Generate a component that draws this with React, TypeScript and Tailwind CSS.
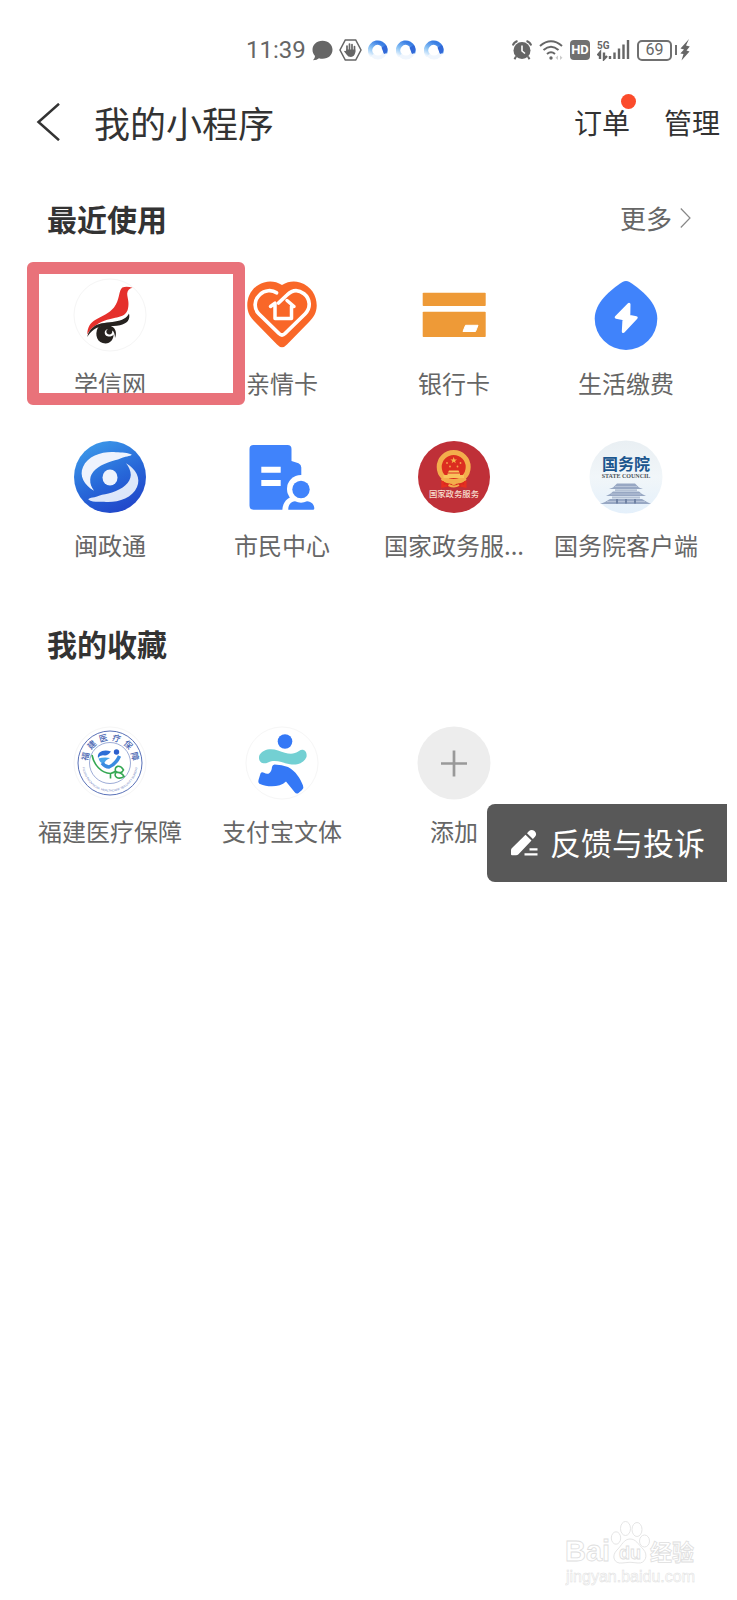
import type { ReactNode } from "react";

function Icon({ children }: { children: ReactNode }) {
  return (
    <svg viewBox="0 0 72 72" className="size-[72px] shrink-0 overflow-visible" aria-hidden="true">
      {children}
    </svg>
  );
}

const ChsiIcon = (
  <Icon>
    <circle cx="36" cy="36" r="36" fill="#fff" stroke="#f5f5f5" />
    <path
      d="M48.300 8.400Q53 7 58.500 8.800Q53.500 10 53.200 14.500C53.200 19 55.500 23 54 29.500C52 39 43 37.500 31 41.500C22 45 16.500 49.500 13.300 55.500C13.500 48 16 44 22 40.500C28 37 35 34.500 40 28.500C46 20.500 44.500 11.500 48.300 8.400Z"
      fill="#e5302c"
    />
    <path
      d="M55 34.500C56.500 41 53 44.500 46 46.300C38 48 26 45.500 20 50.500C17 53 15 55 13.200 58C14 53 17 49.500 21 46.800C26 43.600 34 43.800 41 42.500C48 41.500 53 39 55 34.500Z"
      fill="#26221f"
    />
    <path
      d="M24 48.500C29 45 36 45 40 49C42.500 52 42.300 56 41 59C41 55.500 40 52.500 38.200 51.500C38.800 54.500 36.500 56 34.500 55.300C32 54.500 31.500 51.500 34 50C30 50.500 29.500 56 33.500 57.300C35.500 58 38.500 57.300 39.500 55.500C39.800 60 36.500 64.500 31.500 64.500C23.500 64.500 20 56 24 48.500Z"
      fill="#26221f"
    />
  </Icon>
);

const FamilyCardIcon = (
  <Icon>
    <path
      d="M36 6C30 2.300 24 1.800 18 3.400C6.500 7 1 17 1.300 27C1.500 34 4.500 38.500 9 43L31 65.500Q36 71 41 65.500L63 43C67.500 38.500 70.500 34 70.700 27C71 17 65.500 7 54 3.400C48 1.800 42 2.300 36 6Z"
      fill="#f96728"
    />
    <g fill="none" stroke="#fff" strokeLinecap="round" strokeLinejoin="round">
      <path
        d="M30.500 13.800C26 10.500 18.500 11 14 15.500C8 21 7.500 29.500 13 35L33 54.500Q36 57.500 39 54.500L59 35C65 29 64.500 20 58 14.700C52 10 46 11 41 16L32.500 24"
        strokeWidth="3.700"
      />
      <path d="M24.500 27.500L29 24.200V39.500H45.500V27.500H48L41 21.500" strokeWidth="3.500" />
    </g>
  </Icon>
);

const BankCardIcon = (
  <Icon>
    <rect x="4.700" y="13.700" width="63" height="13.300" rx=".8" fill="#ee9a37" />
    <rect x="4.700" y="32.700" width="63" height="25.300" rx=".8" fill="#ee9a37" />
    <path d="M47.500 46.300H60L57.500 52.500H45Z" fill="#fff" stroke="#fff" strokeLinejoin="round" />
  </Icon>
);

const UtilitiesIcon = (
  <Icon>
    <path
      d="M32.500 3Q36 .8 39.500 3C52 11 67.300 24 67.300 39.700A31.300 31.300 0 0 1 4.700 39.700C4.700 24 20 11 32.500 3Z"
      fill="#4083fb"
    />
    <path
      d="M39 25.300L26.200 38.300L34 39.800L33.300 52.500L46.200 38.700L38.800 37.300Z"
      fill="#fff"
      stroke="#fff"
      strokeWidth="3"
      strokeLinejoin="round"
    />
  </Icon>
);

const MinzhengIcon = (
  <Icon>
    <defs>
      <linearGradient id="minzheng" x1=".2" y1="0" x2=".7" y2="1">
        <stop offset="0" stopColor="#3d9bea" />
        <stop offset=".55" stopColor="#2767d8" />
        <stop offset="1" stopColor="#2145c9" />
      </linearGradient>
    </defs>
    <circle cx="36" cy="36" r="36" fill="url(#minzheng)" />
    <g fill="#eef3fd">
      <path d="M20 49.700C10 44 5 34.500 9 26C14 14 30 10 42 11.200C48 11.500 54 11.500 57.700 13.500C57 15.500 50 15.500 47 17.200C43 19 39 19.500 34 21.500C24 25 16.500 31 16.200 38.500C16 43 17.500 46 20 49.700Z" />
      <path
        d="M52 22.300C62 28 67 37.500 63 46C58 58 42 62 30 60.800C24 60.500 18 61.500 14.300 58.500C15 56.500 22 56.500 25 54.800C29 53 33 53.500 38 51.500C49 48 56.500 41.500 56.800 34C56.700 30 55 26 52 22.300Z"
        fillOpacity=".92"
      />
      <ellipse cx="36" cy="36.500" rx="7.500" ry="8" />
    </g>
  </Icon>
);

const CitizenIcon = (
  <Icon>
    <path
      d="M7.500 4H41.500Q45.500 4 45.500 8V20L52.500 22.300Q55.300 23.500 55.300 26.500V68.700H7.500Q3.500 68.700 3.500 64.500V8Q3.500 4 7.500 4Z"
      fill="#4083fb"
    />
    <path d="M15.300 25.700H34.700V31.700H15.300ZM15.300 39H34.700V45H15.300Z" fill="#fff" />
    <circle cx="55" cy="48" r="14" fill="#fff" />
    <path d="M36.300 70C36.500 61 41 57 48 55H62V70Z" fill="#fff" />
    <circle cx="55" cy="48.500" r="8.700" fill="#4083fb" />
    <path
      d="M42.300 68.700C42 64 45 60.500 49 60.300Q55 63 61 60.300C65.500 60.500 68.500 64 68.300 67.500Q68.300 68.700 67 68.700Z"
      fill="#4083fb"
    />
  </Icon>
);

const GovServiceIcon = (
  <Icon>
    <circle cx="36" cy="36" r="36" fill="#bf3038" />
    <path d="M25 38H47L48 44L43 46H29L24 44Z" fill="#d9291f" />
    <circle cx="35.700" cy="26" r="14.500" fill="#dc2d20" stroke="#f3ae4c" strokeWidth="5" />
    <path
      d="M35.700 16L36.600 18.400H39L37 19.900L37.800 22.200L35.700 20.800L33.600 22.200L34.400 19.900L32.400 18.400H34.800Z"
      fill="#f6b74d"
    />
    <g fill="#f6a34d">
      <circle cx="29" cy="22" r=".9" />
      <circle cx="42.500" cy="22" r=".9" />
      <circle cx="32" cy="25.500" r=".9" />
      <circle cx="39.500" cy="25.500" r=".9" />
    </g>
    <path d="M31 29.500H40.500L41.500 31.500H30ZM29.500 32.500H42V34H46V37H25.500V34H29.500Z" fill="#f9c35c" />
    <path
      d="M23.500 38Q30 43 34 40Q36 38.500 38 40Q42 43 48 38M30.500 44Q36 47 41 44"
      fill="none"
      stroke="#f3ae4c"
      strokeWidth="2"
    />
    <circle cx="35.800" cy="41.500" r="2.500" fill="#f3ae4c" />
    <path d="M24.500 40V45.500L29 44.500M47.300 40V45.500L43 44.500" fill="none" stroke="#e52f20" strokeWidth="2.500" />
    <text
      x="36"
      y="56"
      textAnchor="middle"
      fontSize="8.400"
      fontWeight="500"
      fill="#f7dfcf"
    >
      国家政务服务
    </text>
  </Icon>
);

const StateCouncilIcon = (
  <Icon>
    <defs>
      <linearGradient id="council" x1="0" y1="0" x2="0" y2="1">
        <stop offset="0" stopColor="#e9eff3" />
        <stop offset=".5" stopColor="#f1f6f9" />
        <stop offset="1" stopColor="#e4f0fb" />
      </linearGradient>
    </defs>
    <circle cx="36" cy="36" r="36.500" fill="url(#council)" />
    <text x="36" y="29" textAnchor="middle" fontSize="16" fontWeight="700" fill="#1c568e">
      国务院
    </text>
    <text
      x="36"
      y="37"
      textAnchor="middle"
      fontSize="6"
      fontWeight="700"
      fill="#4b5158"
      className="font-['Liberation_Serif']"
    >
      STATE COUNCIL
    </text>
    <g fill="#97a7c3">
      <path d="M26 43.500L27 42.500H45L46 43.500L49 46.500L53 48H19L23 46.500Z" />
      <path d="M23 50.500H49L52 53L56 55H16L20 53Z" />
      <path d="M20 58H52L57 61L61 63H10L15 61Z" />
    </g>
    <path d="M25 49.300H47M22 56.500H50" stroke="#b4c1d5" strokeWidth="2" />
    <path d="M25 45.500H47M21 53H51M17 60.500H55" stroke="#cdd7e6" strokeWidth=".6" />
    <path d="M27 58V62.500M36 58V62.500M45 58V62.500" stroke="#7083a5" strokeWidth="2" />
  </Icon>
);

const MedicalIcon = (
  <Icon>
    <defs>
      <path id="medical-bottom" d="M8.400 37A27.600 27.600 0 0 0 63.600 37" />
    </defs>
    <circle cx="36" cy="36" r="36" fill="#fff" stroke="#f6f6f6" />
    <circle cx="36" cy="36" r="32" fill="none" stroke="#5a72b8" strokeWidth="1" />
    <circle cx="36" cy="36" r="20.500" fill="none" stroke="#8497cc" strokeWidth=".8" />
    {[
      ["福", -75],
      ["建", -45],
      ["医", -15],
      ["疗", 15],
      ["保", 45],
      ["障", 75],
    ].map(([glyph, angle]) => (
      <text
        key={glyph}
        x="36"
        y="13.500"
        textAnchor="middle"
        fontSize="8.500"
        fontWeight="500"
        fill="#4663b0"
        transform={`rotate(${angle} 36 36)`}
      >
        {glyph}
      </text>
    ))}
    <text fontSize="3" fill="#6a80bd" className="font-['Liberation_Sans']">
      <textPath href="#medical-bottom" startOffset="50%" textAnchor="middle">
        FUJIAN PROVINCIAL HEALTHCARE SECURITY BUREAU
      </textPath>
    </text>
    <path d="M37 24.500C29 22 23 25 24 31Q26 27.500 31 28.500Q34 28.500 37 24.500Z" fill="#2d6fd6" />
    <path d="M24.500 31.500Q30 30 36 31Q31 33 30 37Q26 36 24.500 31.500Z" fill="#49a5ea" />
    <path d="M28 36Q31 40 35 40Q42 37 45.500 29" fill="none" stroke="#3a8be0" strokeWidth="3.500" />
    <circle cx="42.500" cy="25" r="2.700" fill="#2d5fcc" />
    <g fill="none" stroke="#35a853" strokeWidth="1.600">
      <path d="M18 28C20 38 27 46 36.500 46.500V51.500M36.500 46.500Q40 45.500 42 44" />
      <path d="M41.500 44C40 39 46 37 49.500 43C48 46.500 44 46.500 41.500 44ZM42 45.500C39 49 44 53.500 50 49.500C48 46 45 45 42 45.500Z" />
    </g>
  </Icon>
);

const SportsIcon = (
  <Icon>
    <circle cx="36" cy="36" r="36" fill="#fff" stroke="#f6f6f6" />
    <circle cx="39" cy="14.500" r="7.300" fill="#3478f6" />
    <path
      d="M13.500 28C17 22 25 21 32 23.500C40 26 46 29 53 24C57 21 61.500 24 60.500 30C58 36 51 38.500 44 37.300C36 36 30 32 22 35.500C15.500 38.500 11.500 33 13.500 28Z"
      fill="#73d0d3"
    />
    <path
      d="M28.500 37.500Q36 37.500 42 40C50 44.500 54 51 57 58.500Q58.200 61 56 63L52.500 66Q50.500 67.500 48.500 65L40 54.500C34 60.500 22 60.500 14 57Q11.800 56 12.500 53L14.500 46.500Q15.500 44.500 18 45.700C22 48.500 25.500 46 26 40Q26.500 37.500 28.500 37.500Z"
      fill="#3478f6"
    />
  </Icon>
);

const AddIcon = (
  <Icon>
    <circle cx="36" cy="36" r="36.500" fill="#ededed" />
    <path d="M23 36.500H49M36 23.500V49.500" stroke="#999" strokeWidth="2.700" />
  </Icon>
);

type App = { name: string; icon: ReactNode; marked?: boolean };

const recent: App[] = [
  { name: "学信网", icon: ChsiIcon, marked: true },
  { name: "亲情卡", icon: FamilyCardIcon },
  { name: "银行卡", icon: BankCardIcon },
  { name: "生活缴费", icon: UtilitiesIcon },
  { name: "闽政通", icon: MinzhengIcon },
  { name: "市民中心", icon: CitizenIcon },
  { name: "国家政务服...", icon: GovServiceIcon },
  { name: "国务院客户端", icon: StateCouncilIcon },
];

const favorites: App[] = [
  { name: "福建医疗保障", icon: MedicalIcon },
  { name: "支付宝文体", icon: SportsIcon },
  { name: "添加", icon: AddIcon },
];

function AppGrid({ apps }: { apps: App[] }) {
  return (
    <ul className="grid grid-cols-4 gap-y-[42px] pr-[15px] pl-6">
      {apps.map((app) => (
        <li key={app.name} className="relative flex justify-center">
          <button className="flex flex-col items-center gap-4 text-2xl leading-8 whitespace-nowrap text-[#666]">
            {app.icon}
            <span>{app.name}</span>
          </button>
          {app.marked && (
            <span className="pointer-events-none absolute -top-[17px] left-[3px] h-[143px] w-[218px] rounded-md border-12 border-[#e9727a]" />
          )}
        </li>
      ))}
    </ul>
  );
}

function LoadingRing({ id }: { id: string }) {
  return (
    <svg viewBox="0 0 20 20" className="size-5" aria-hidden="true">
      <defs>
        <linearGradient id={id} x1="0" y1="1" x2=".6" y2="0">
          <stop offset="0" stopColor="#eef6fe" />
          <stop offset=".45" stopColor="#8cc4f5" />
          <stop offset="1" stopColor="#3a7ee4" />
        </linearGradient>
      </defs>
      <circle cx="10" cy="10" r="7.500" fill="none" stroke="#f0f6fd" strokeWidth="4" />
      <path d="M4 15.500A7.700 7.700 0 1 1 17 13" fill="none" stroke={`url(#${id})`} strokeWidth="4.500" />
      <path d="M13.500 7.500L16 14L18.500 13Q20.500 9 18 5Z" fill="#3168d8" />
    </svg>
  );
}

function StatusBar() {
  return (
    <div className="flex h-9 items-center justify-between pr-[37px] pl-[246px] text-[#666]">
      <div className="flex items-center gap-1.5">
        <span className="font-['Roboto',sans-serif] text-2xl leading-9">11:39</span>
        <svg viewBox="0 0 21 21" className="size-[21px]" aria-hidden="true">
          <path
            d="M10.500.8C16.500.8 20.500 4.800 20.500 9.800S16.500 18.800 10.500 18.800Q8.500 18.800 7 18.200Q5 20.300 1 20.300Q3 18.500 3 16C1.300 14.300.5 12.200.5 9.800C.5 4.800 4.500.8 10.500.8Z"
            fill="currentColor"
          />
        </svg>
        <svg viewBox="0 0 23 22" className="h-[22px] w-[23px]" aria-hidden="true">
          <path d="M6.300 1H16.700L22 11L16.700 21H6.300L1 11Z" fill="none" stroke="currentColor" strokeWidth="1.500" />
          <path
            d="M8 12.500V7M10.500 11V5M13 11V5.500M15.500 12.500V7.500"
            stroke="currentColor"
            strokeWidth="1.700"
            strokeLinecap="round"
          />
          <path d="M7.200 10.500H16.300V13.500Q15.500 17.500 12 18Q9 18 7.500 15.500L5 12.300Q6 11 7.500 12.500Z" fill="currentColor" />
        </svg>
        <span className="flex gap-2">
          <LoadingRing id="ring-a" />
          <LoadingRing id="ring-b" />
          <LoadingRing id="ring-c" />
        </span>
      </div>
      <div className="flex items-center gap-[7px] font-['Roboto',sans-serif]">
        <svg viewBox="0 0 20 20" className="size-5" aria-hidden="true">
          <circle cx="10" cy="10.500" r="8.500" fill="currentColor" />
          <path d="M.8 5.500Q2 2 5.500 1M19.200 5.500Q18 2 14.500 1" fill="none" stroke="currentColor" strokeWidth="2" />
          <path d="M4 16.500L2.500 19.300M16 16.500L17.500 19.300" stroke="currentColor" strokeWidth="2" />
          <path d="M10 5.500V11L13 13.500" fill="none" stroke="#fff" strokeWidth="1.600" />
        </svg>
        <svg viewBox="0 0 24 20" className="h-5 w-6" aria-hidden="true">
          <g fill="none" stroke="currentColor" strokeWidth="2">
            <path d="M1 6Q12-3.500 23 6M4.500 10Q12 3.500 19.500 10M8 14Q12 10.500 16 14" />
          </g>
          <circle cx="12" cy="18" r="1.700" fill="currentColor" />
          <path d="M19 15.500V20L16.500 17.700ZM21 15.500V20L23.500 17.700Z" fill="#ccc" />
        </svg>
        <span className="flex h-5 w-5 items-center justify-center rounded-sm bg-[#707070] text-[13px] leading-5 font-bold text-white">
          HD
        </span>
        <svg viewBox="0 0 33 22" className="h-[22px] w-[33px]" aria-hidden="true">
          <text x="0" y="9.500" fontSize="10" fontWeight="700" fill="currentColor">
            5G
          </text>
          <path
            d="M3 20V13.500L.5 16.500M7 13.500V20L10 17M13 20V17M17.500 20V13.500M22 20V9.500M26.500 20V5.500M31 20V1"
            fill="none"
            stroke="currentColor"
            strokeWidth="2.400"
          />
        </svg>
        <span className="flex items-center gap-[3px]">
          <span className="flex h-[21px] w-[35px] items-center justify-center rounded-[5px] border-2 border-[#707070] text-[16px] leading-4">
            69
          </span>
          <span className="h-[10px] w-[2px] bg-[#707070]" />
          <svg viewBox="0 0 10 22" className="h-[22px] w-[10px]" aria-hidden="true">
            <path d="M9 0L.5 9.500L4 10.500L.3 14.500L3.500 15L1.500 21.500L9.500 12.500L6.500 11.500L9.800 7.500L6 6.500Z" fill="currentColor" />
          </svg>
        </span>
      </div>
    </div>
  );
}

function Watermark() {
  return (
    <svg viewBox="0 0 134 66" className="h-[66px] w-[134px]" role="img" aria-label="Baidu">
      <g fill="#fff" stroke="#dedede" strokeWidth=".8">
        <text x="0" y="41" fontSize="29" fontWeight="700" className="font-['Liberation_Sans']">
          Bai
        </text>
        <ellipse cx="51" cy="18" rx="4.700" ry="6.200" />
        <ellipse cx="60.500" cy="8.500" rx="5" ry="7" />
        <ellipse cx="72" cy="9.500" rx="5" ry="7" />
        <ellipse cx="79.500" cy="21" rx="5" ry="6" />
        <path d="M65 19C71 19 73 24 78 29C84 35 80 44 73 43Q65 41.500 57 43C49 44 46 36 52 30C57 25 59 19 65 19Z" />
        <text x="54" y="39" fontSize="18" fontWeight="700" className="font-['Liberation_Sans']">
          du
        </text>
        <text x="85" y="40" fontSize="22" fontWeight="700">
          经验
        </text>
        <text x="1" y="62" fontSize="16" strokeWidth=".5" className="font-['Liberation_Sans']">
          jingyan.baidu.com
        </text>
      </g>
    </svg>
  );
}

export default function App() {
  return (
    <div className="flex min-h-screen flex-col bg-white pt-8 font-['Noto_Sans_CJK_SC',sans-serif] text-[#333]">
      <div className="mr-[10px]">
        <StatusBar />

        <header className="flex h-[108px] items-center pr-[7px] pl-9">
          <button aria-label="返回" className="mr-[34px]">
            <svg viewBox="0 0 24 38" className="h-[38px] w-6" aria-hidden="true">
              <path d="M23 .8L2.500 19L23 37.200" fill="none" stroke="#333" strokeWidth="2.500" />
            </svg>
          </button>
          <h1 className="text-4xl leading-[52px]">我的小程序</h1>
          <nav className="ml-auto flex gap-[34px] text-[28px] leading-10">
            <a href="#orders" className="relative">
              订单
              <span className="absolute -top-2 -right-1.5 size-[15px] rounded-full bg-[#fb4b2b]" />
            </a>
            <a href="#manage">管理</a>
          </nav>
        </header>

        <main>
          <section>
            <div className="mb-5 flex h-[83px] items-center justify-between pr-9 pl-[47px]">
              <h2 className="text-3xl leading-10 font-bold">最近使用</h2>
              <a href="#more" className="flex items-center gap-2 text-[26px] leading-10 text-[#666]">
                更多
                <svg viewBox="0 0 11 20" className="h-5 w-[11px]" aria-hidden="true">
                  <path d="M.8.500L10 10L.8 19.500" fill="none" stroke="#888" strokeWidth="1.200" />
                </svg>
              </a>
            </div>
            <AppGrid apps={recent} />
          </section>

          <section className="relative mt-10">
            <div className="mb-[43px] flex h-[83px] items-center pl-[47px]">
              <h2 className="text-3xl leading-10 font-bold">我的收藏</h2>
            </div>
            <AppGrid apps={favorites} />
            <button className="absolute top-[203px] right-0 flex h-[78px] items-center gap-3 rounded-l-lg bg-[#585858] pr-[22px] pb-[2px] pl-[23px] text-[31px] leading-10 whitespace-nowrap text-white">
              <svg viewBox="0 0 28 28" className="size-7" aria-hidden="true">
                <path
                  d="M15.500 6.800L21.500 12.500L8.500 26.300Q7.500 27.300 6 27.300H2Q1 27.300 1 26.300V22.300Q1 21 2 20ZM17 5.300L18.800 3.200Q21.500.7 24.500 3Q27.500 6 25 8.700L22.900 11Z"
                  fill="#fff"
                />
                <path d="M19.500 21.300H27.500M14.500 26.300H27.500" stroke="#fff" strokeWidth="2.200" />
              </svg>
              反馈与投诉
            </button>
          </section>
        </main>
      </div>

      <footer className="mt-auto flex justify-end pr-[38px] pb-[14px]">
        <Watermark />
      </footer>
    </div>
  );
}
